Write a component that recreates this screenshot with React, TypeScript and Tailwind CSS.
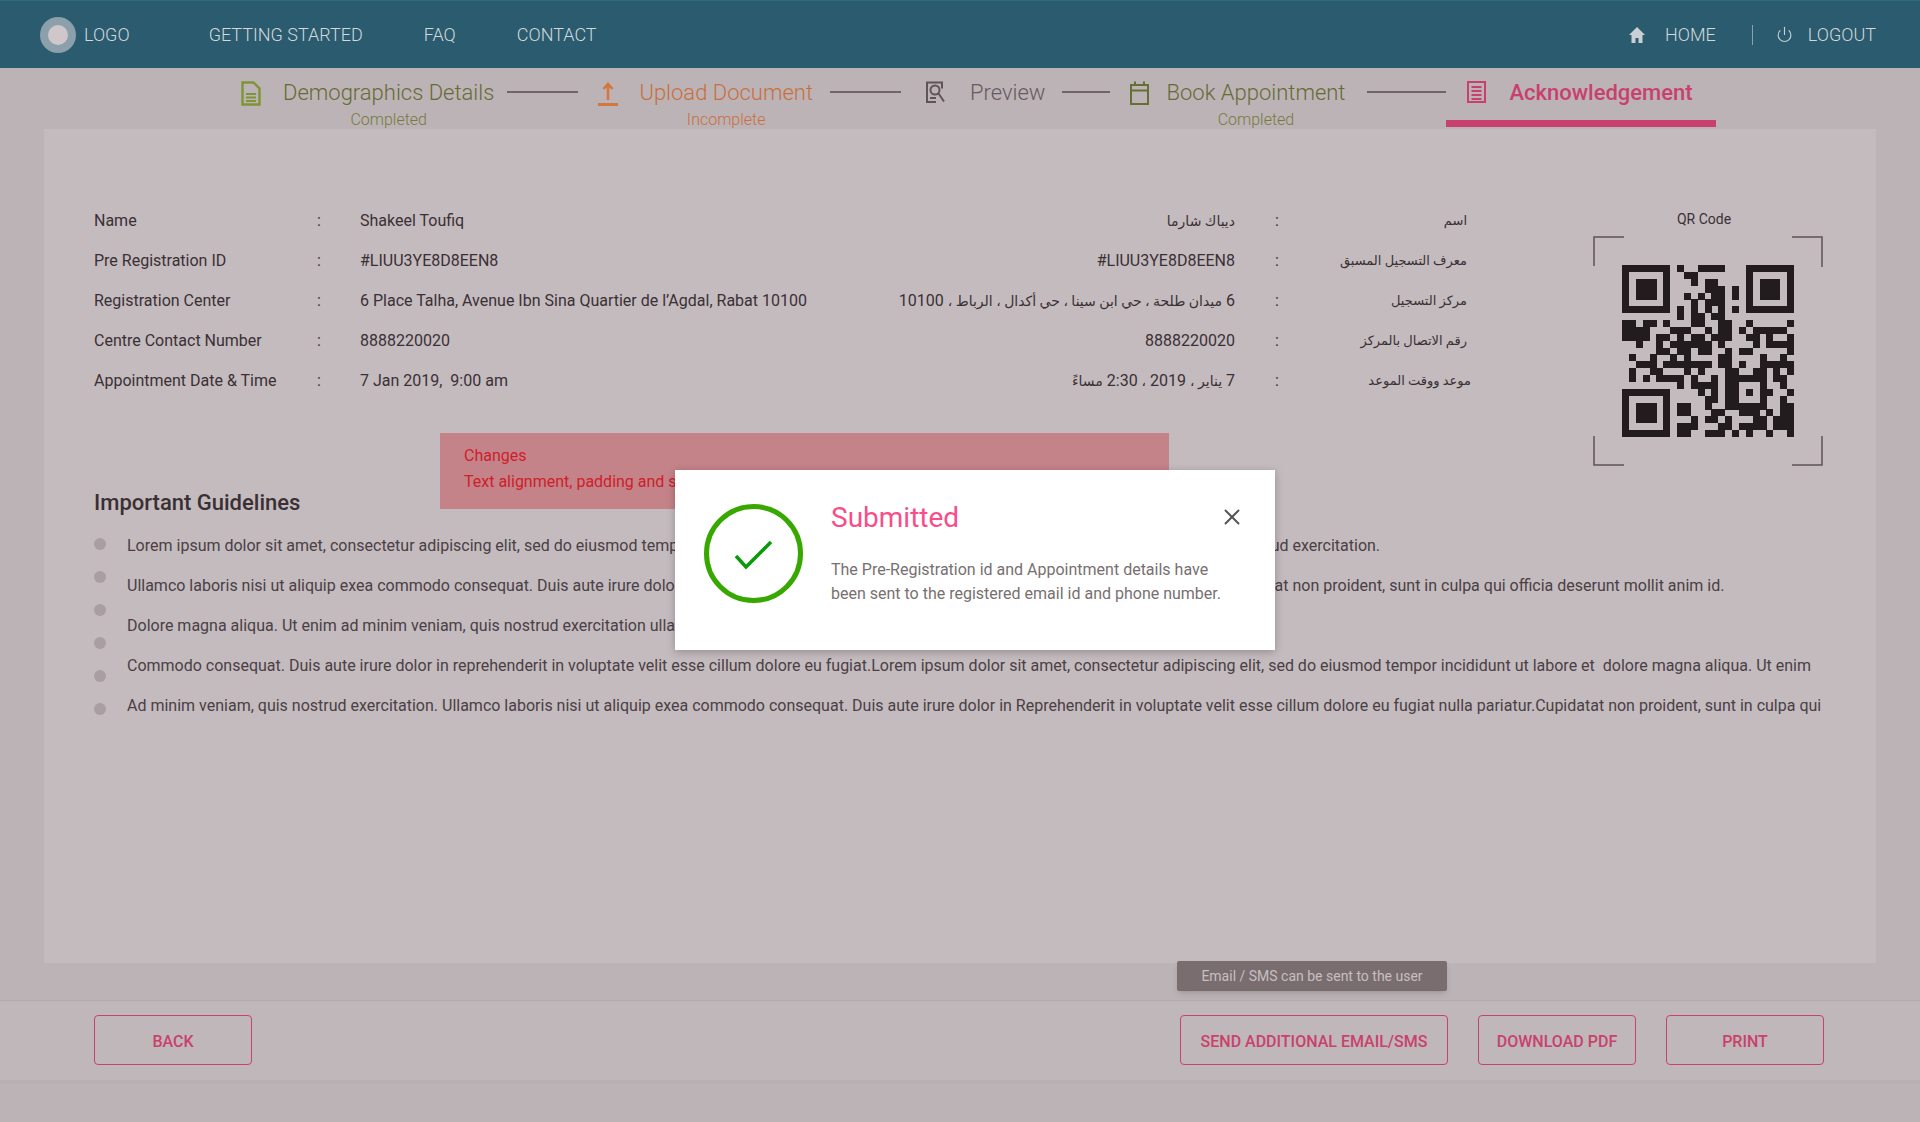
import React from "react";
import { Power, X } from "lucide-react";

const QR = [
  "1111111010011110001111111",
  "1000001001100000001000001",
  "1011101000101100001011101",
  "1011101000001110101011101",
  "1011101001010110101011101",
  "1000001000101110001000001",
  "1111111010101010101111111",
  "0000000010110110000000000",
  "1101101000110011001000001",
  "1111000111001011010111110",
  "1111011010110111001101001",
  "0010010111111010000101111",
  "0000011011011001011000001",
  "0100100101000011000010010",
  "0011101111111011010011111",
  "0100110001010001100110101",
  "0101011110100101111110110",
  "0000000010111101100010010",
  "1111111000010101101011001",
  "1000001000001101100010010",
  "1011101011001001111110011",
  "1011101011000110011101011",
  "1011101000101101000110111",
  "1000001011100011011110111",
  "1111111011001110101001001",
];

const Ar = ({ children }: { children: React.ReactNode }) => <span className="text-[14px]">{children}</span>;

const rows: [string, string, React.ReactNode, string, string][] = [
  ["Name", "Shakeel Toufiq", <Ar>ديباك شارما</Ar>, "اسم", ""],
  ["Pre Registration ID", "#LIUU3YE8D8EEN8", "#LIUU3YE8D8EEN8", "معرف التسجيل المسبق", ""],
  ["Registration Center", "6 Place Talha, Avenue Ibn Sina Quartier de l’Agdal, Rabat 10100", <>6 <Ar>ميدان طلحة ، حي ابن سينا ، حي أكدال ، الرباط ،</Ar> 10100</>, "مركز التسجيل", ""],
  ["Centre Contact Number", "8888220020", "8888220020", "رقم الاتصال بالمركز", ""],
  ["Appointment Date & Time", "7 Jan 2019,  9:00 am", <>7 <Ar>يناير ،</Ar> 2019 <Ar>،</Ar> 2:30 <Ar>مساءً</Ar></>, "موعد ووقت الموعد", "-mr-[4px]"],
];

const guidelines = [
  "Lorem ipsum dolor sit amet, consectetur adipiscing elit, sed do eiusmod tempor incididunt ut labore et  dolore magna aliqua. Ut enim ad minim veniam, quis nostrud exercitation.",
  "Ullamco laboris nisi ut aliquip exea commodo consequat. Duis aute irure dolor in reprehenderit in voluptate velit esse cillum dolore eu fugiat nulla pariatur. Cupidatat non proident, sunt in culpa qui officia deserunt mollit anim id.",
  "Dolore magna aliqua. Ut enim ad minim veniam, quis nostrud exercitation ullamco laboris nisi ut aliquip.",
  "Commodo consequat. Duis aute irure dolor in reprehenderit in voluptate velit esse cillum dolore eu fugiat.Lorem ipsum dolor sit amet, consectetur adipiscing elit, sed do eiusmod tempor incididunt ut labore et  dolore magna aliqua. Ut enim",
  "Ad minim veniam, quis nostrud exercitation. Ullamco laboris nisi ut aliquip exea commodo consequat. Duis aute irure dolor in Reprehenderit in voluptate velit esse cillum dolore eu fugiat nulla pariatur.Cupidatat non proident, sunt in culpa qui",
];

function QrCode() {
  return (
    <svg width="172" height="172" viewBox="0 0 25 25" shapeRendering="crispEdges">
      {QR.flatMap((row, y) =>
        row.split("").map((c, x) => (c === "1" ? <rect key={`${x}-${y}`} x={x} y={y} width="1.02" height="1.02" fill="#231c1f" /> : null))
      )}
    </svg>
  );
}

const Line = ({ cls }: { cls: string }) => <div className={`mt-[12px] h-[2px] bg-[#6f6468] ${cls}`} />;

function Btn({ children, cls }: { children: React.ReactNode; cls: string }) {
  return (
    <button className={`h-[50px] rounded-[4px] border-[1.5px] border-[#c9416d] pt-[4px] text-[16px] font-medium text-[#c9416d] ${cls}`}>
      {children}
    </button>
  );
}

export default function App() {
  return (
    <div className="relative flex h-[1122px] w-[1920px] flex-col overflow-hidden bg-[#bcb3b6] [font-family:Roboto,'DejaVu_Sans',sans-serif]">
      <header className="flex h-[68px] shrink-0 items-center border-t border-[#2f6a7b] bg-[#2a5b6f] pl-[40px] text-[18px] font-light text-[#d3d8da]">
        <div className="flex h-[36px] w-[36px] items-center justify-center rounded-full bg-[#8ba0ab]">
          <div className="h-[20px] w-[20px] rounded-full bg-[#cfc7ca]" />
        </div>
        <span className="ml-[8px]">LOGO</span>
        <span className="ml-[79px]">GETTING STARTED</span>
        <span className="ml-[61px]">FAQ</span>
        <span className="ml-[61px]">CONTACT</span>
        <svg className="ml-auto" width="18" height="18" viewBox="0 0 18 18" fill="#c9cfd2">
          <path d="M9 1 1 9h2.500v8h4v-5h3v5h4V9H17z" />
        </svg>
        <span className="ml-[19px]">HOME</span>
        <div className="ml-[36px] h-[20px] w-px bg-[#8ba0ab]" />
        <Power className="ml-[23px]" size={17} strokeWidth={1.6} color="#c9cfd2" />
        <span className="ml-[15px] mr-[44px]">LOGOUT</span>
      </header>

      <nav className="flex h-[61px] shrink-0 items-start pl-[241px] pt-[11px] text-[22px] font-light">
        <svg className="mt-[2px]" width="20" height="25" viewBox="0 0 20 25" fill="none" stroke="#7f9435" strokeWidth="2.400">
          <path d="M1.500 1.500h11l6 6v16h-17z" />
          <path d="M5 13h10M5 16.500h10M5 20h10" strokeWidth="2" />
        </svg>
        <div className="ml-[22px] flex flex-col items-center text-[#656b35]">
          <span className="h-[30px] whitespace-nowrap leading-[28px]">Demographics Details</span>
          <span className="text-[16px] leading-[22px] text-[#757b3e]">Completed</span>
        </div>
        <Line cls="ml-[13px] w-[71px]" />
        <svg className="ml-[20px] mt-[3px]" width="20" height="24" viewBox="0 0 20 24" fill="none" stroke="#d5763f">
          <path d="M10 18V3M5.500 7 10 2l4.500 5" strokeWidth="2.600" />
          <path d="M0 22.500h20" strokeWidth="3" />
        </svg>
        <div className="ml-[21px] flex flex-col items-center text-[#c96f3c]">
          <span className="h-[30px] whitespace-nowrap leading-[28px]">Upload Document</span>
          <span className="text-[16px] leading-[22px]">Incomplete</span>
        </div>
        <Line cls="ml-[17px] w-[71px]" />
        <svg className="ml-[24px] mt-[2px]" width="21" height="24" viewBox="0 0 21 24" fill="none" stroke="#5f5559" strokeWidth="2">
          <path d="M11 21H2V1.500h15v6" />
          <circle cx="10" cy="9" r="4.500" />
          <path d="M13.500 12.500l5.500 8M5 17h6" />
        </svg>
        <span className="ml-[24px] h-[30px] leading-[28px] text-[#665a5e]">Preview</span>
        <Line cls="ml-[17px] w-[48px]" />
        <svg className="ml-[20px] mt-[2px]" width="19" height="24" viewBox="0 0 19 24" fill="none" stroke="#667032" strokeWidth="2">
          <rect x="1" y="4" width="17" height="19" />
          <path d="M1 9.500h17M5 .500v4M14 .500v4" />
        </svg>
        <div className="ml-[17px] flex flex-col items-center text-[#656b35]">
          <span className="h-[30px] whitespace-nowrap leading-[28px]">Book Appointment</span>
          <span className="text-[16px] leading-[22px] text-[#757b3e]">Completed</span>
        </div>
        <Line cls="ml-[22px] w-[79px]" />
        <div className="flex h-[48px] w-[270px] items-start border-b-[7px] border-[#c8416e] pl-[21px]">
          <svg className="mt-[2px]" width="19" height="22" viewBox="0 0 19 22" fill="none" stroke="#c8416e" strokeWidth="2">
            <rect x="1" y="1" width="17" height="20" />
            <path d="M4.500 6h10M4.500 10h10M4.500 14h10M4.500 18h10" />
          </svg>
          <span className="ml-[23px] whitespace-nowrap font-medium leading-[28px] text-[#c8416e]">Acknowledgement</span>
        </div>
      </nav>

      <main className="relative mx-[44px] h-[834px] shrink-0 bg-[#c4bbbf] px-[50px] text-[16px] text-[#3a3034]">
        <div className="absolute left-[396px] top-[304px] flex h-[76px] w-[729px] flex-col justify-center bg-[#c48388] pb-[4px] pl-[24px] leading-[26px] text-[#cf1d2a]">
          <span>Changes</span>
          <span>Text alignment, padding and spacing corrected</span>
        </div>

        <section className="flex items-start pt-[72px]">
          <div className="grid grid-cols-[223px_43px_540px_335px_84px_148px] auto-rows-[40px] items-center">
            {rows.map((r) => (
              <React.Fragment key={r[0]}>
                <span>{r[0]}</span>
                <span>:</span>
                <span className="whitespace-pre">{r[1]}</span>
                <span dir="auto" className="whitespace-nowrap text-right">{r[2]}</span>
                <span className="text-center">:</span>
                <span dir="rtl" className={`whitespace-nowrap text-[13px] ${r[4]}`}>{r[3]}</span>
              </React.Fragment>
            ))}
          </div>
          <div className="ml-[126px] mt-[8px] flex w-[230px] flex-col items-center">
            <span className="mr-[8px] text-[14px] leading-[20px]">QR Code</span>
            <div className="relative mt-[7px] flex h-[230px] w-[230px] items-center justify-center">
              <svg className="absolute inset-0" width="230" height="230" viewBox="0 0 230 230" fill="none" stroke="#5d5458" strokeWidth="1.500">
                <path d="M1 30V1h30M199 1h30v30M1 200v29h30M199 229h30v-29" />
              </svg>
              <QrCode />
            </div>
          </div>
        </section>

        <h2 className="mt-[22px] text-[22px] font-medium leading-[30px] text-[#3a3034]">Important Guidelines</h2>
        <div className="mt-[8px] flex">
          <div className="flex flex-col gap-[21px] pt-[12px]">
            {[0, 1, 2, 3, 4, 5].map((i) => (
              <div key={i} className="h-[12px] w-[12px] rounded-full bg-[#a89ea3]" />
            ))}
          </div>
          <div className="ml-[21px] flex flex-col text-[#4a4044]">
            {guidelines.map((g) => (
              <p key={g} className="h-[40px] whitespace-pre leading-[40px]">{g}</p>
            ))}
          </div>
        </div>
      </main>

      <div className="absolute left-[1177px] top-[961px] flex h-[30px] w-[270px] items-center justify-center rounded-[2px] bg-[#796d70] text-[14px] text-[#c8bfc2] shadow-md">
        Email / SMS can be sent to the user
      </div>

      <footer className="mt-[37px] flex h-[80px] shrink-0 items-center border-t border-[#b4aaae] bg-[#c0b7ba] pb-[2px] pl-[94px] pr-[96px] shadow-[0_4px_0_#b9b0b3]">
        <Btn cls="w-[158px]">BACK</Btn>
        <Btn cls="ml-auto w-[268px]">SEND ADDITIONAL EMAIL/SMS</Btn>
        <Btn cls="ml-[30px] w-[158px]">DOWNLOAD PDF</Btn>
        <Btn cls="ml-[30px] w-[158px]">PRINT</Btn>
      </footer>

      <div className="absolute left-[675px] top-[470px] flex h-[180px] w-[600px] bg-white shadow-[0_2px_8px_rgba(0,0,0,0.25)]">
        <svg className="ml-[29px] mt-[34px]" width="99" height="99" viewBox="0 0 99 99" fill="none">
          <circle cx="49.500" cy="49.500" r="47" stroke="#37a800" strokeWidth="5" />
          <path d="M32 52l10 11 25-25" stroke="#0a9a0a" strokeWidth="3.500" />
        </svg>
        <div className="ml-[28px] flex flex-col">
          <span className="mt-[31px] text-[28px] leading-[34px] text-[#f84d8b]">Submitted</span>
          <p className="mt-[23px] whitespace-nowrap text-[16px] leading-[24px] text-[#777070]">
            The Pre-Registration id and Appointment details have
            <br />
            been sent to the registered email id and phone number.
          </p>
        </div>
        <X className="absolute left-[544px] top-[34px]" size={26} strokeWidth={1.8} color="#555555" />
      </div>
    </div>
  );
}
